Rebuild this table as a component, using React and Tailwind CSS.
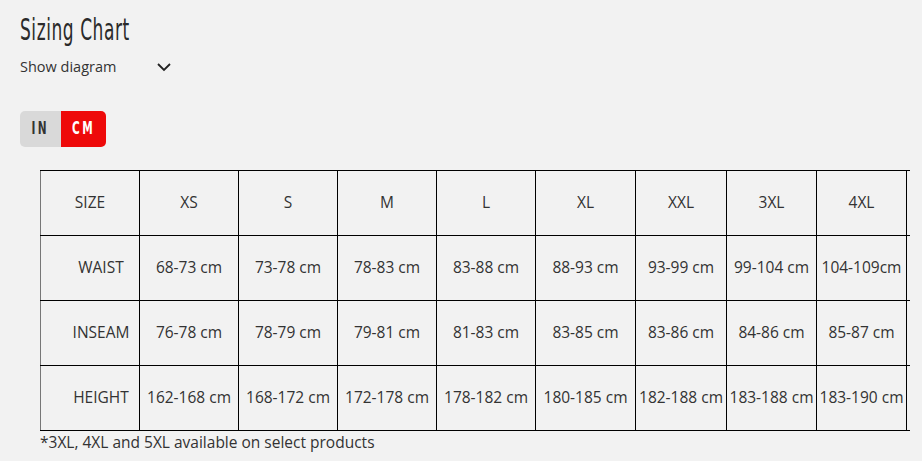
import React, { useState } from "react";

const sizes = ["XS", "S", "M", "L", "XL", "XXL", "3XL", "4XL", "5XL"];
const widths = ["w-[99px]", "w-[99px]", "w-[99px]", "w-[99px]", "w-[100px]", "w-[91px]", "w-[90px]", "w-[90px]", "w-[92px]"];

const rows = [
  { label: "WAIST", values: ["68-73 cm", "73-78 cm", "78-83 cm", "83-88 cm", "88-93 cm", "93-99 cm", "99-104 cm", "104-109cm", "109-114cm"] },
  { label: "INSEAM", values: ["76-78 cm", "78-79 cm", "79-81 cm", "81-83 cm", "83-85 cm", "83-86 cm", "84-86 cm", "85-87 cm", "86-88 cm"] },
  { label: "HEIGHT", values: ["162-168 cm", "168-172 cm", "172-178 cm", "178-182 cm", "180-185 cm", "182-188 cm", "183-188 cm", "183-190 cm", "185-192 cm"] },
];

export default function App() {
  const [unit, setUnit] = useState("CM");
  const [open, setOpen] = useState(false);

  return (
    <div className="min-h-[461px] w-[922px] overflow-hidden bg-[#f2f2f2] text-[#333] font-['Open_Sans',sans-serif]">
      <div className="pl-[20px] pt-[10px]">
        <h2 className="h-[36px] leading-[36px] text-[31px] text-[#2a2a2a]">
          <span className="inline-block origin-left scale-x-[0.55] font-['DejaVu_Sans',sans-serif] tracking-[1px]">Sizing Chart</span>
        </h2>
        <button onClick={() => setOpen(!open)} className="mt-[10px] flex items-center text-[14.5px] text-[#333]">
          Show diagram
          <svg className="ml-[40px]" width="16" height="16" viewBox="0 0 16 16" fill="none" stroke="#222" strokeWidth="1.8">
            <path d="M2 5l6 6 6-6" />
          </svg>
        </button>

        <div className="mt-[33px] flex h-[36px] w-[86px] overflow-hidden rounded-[5px] text-[17px] font-bold font-['DejaVu_Sans',sans-serif]">
          <button onClick={() => setUnit("IN")} className={`w-[41px] ${unit === "IN" ? "bg-[#ee0a0a] text-white" : "bg-[#d9d9d9] text-[#333]"}`}>
            <span className="inline-block scale-x-[0.62] tracking-[4px]">IN</span>
          </button>
          <button onClick={() => setUnit("CM")} className={`w-[45px] ${unit === "CM" ? "bg-[#ee0a0a] text-white" : "bg-[#d9d9d9] text-[#333]"}`}>
            <span className="inline-block scale-x-[0.62] tracking-[4px]">CM</span>
          </button>
        </div>
      </div>

      <div className="ml-[40px] mt-[23px] w-[870px] overflow-hidden">
        <table className="w-[958px] table-fixed border-collapse text-[15.5px] text-[#333]">
          <thead>
            <tr className="h-[65px]">
              <td className="w-[99px] border border-black border-l-[#777] text-center">SIZE</td>
              {sizes.map((s, i) => (
                <td key={s} className={`${widths[i]} border border-black text-center`}>{s}</td>
              ))}
            </tr>
          </thead>
          <tbody>
            {rows.map((r) => (
              <tr key={r.label} className="h-[65px]">
                <td className="border border-black border-l-[#777] pl-[22px] text-center">{r.label}</td>
                {r.values.map((v) => (
                  <td key={v + r.label} className="whitespace-nowrap border border-black text-center">{v}</td>
                ))}
              </tr>
            ))}
          </tbody>
        </table>
      </div>
      <p className="ml-[40px] mt-0 text-[15.5px] text-[#333]">*3XL, 4XL and 5XL available on select products</p>
    </div>
  );
}
